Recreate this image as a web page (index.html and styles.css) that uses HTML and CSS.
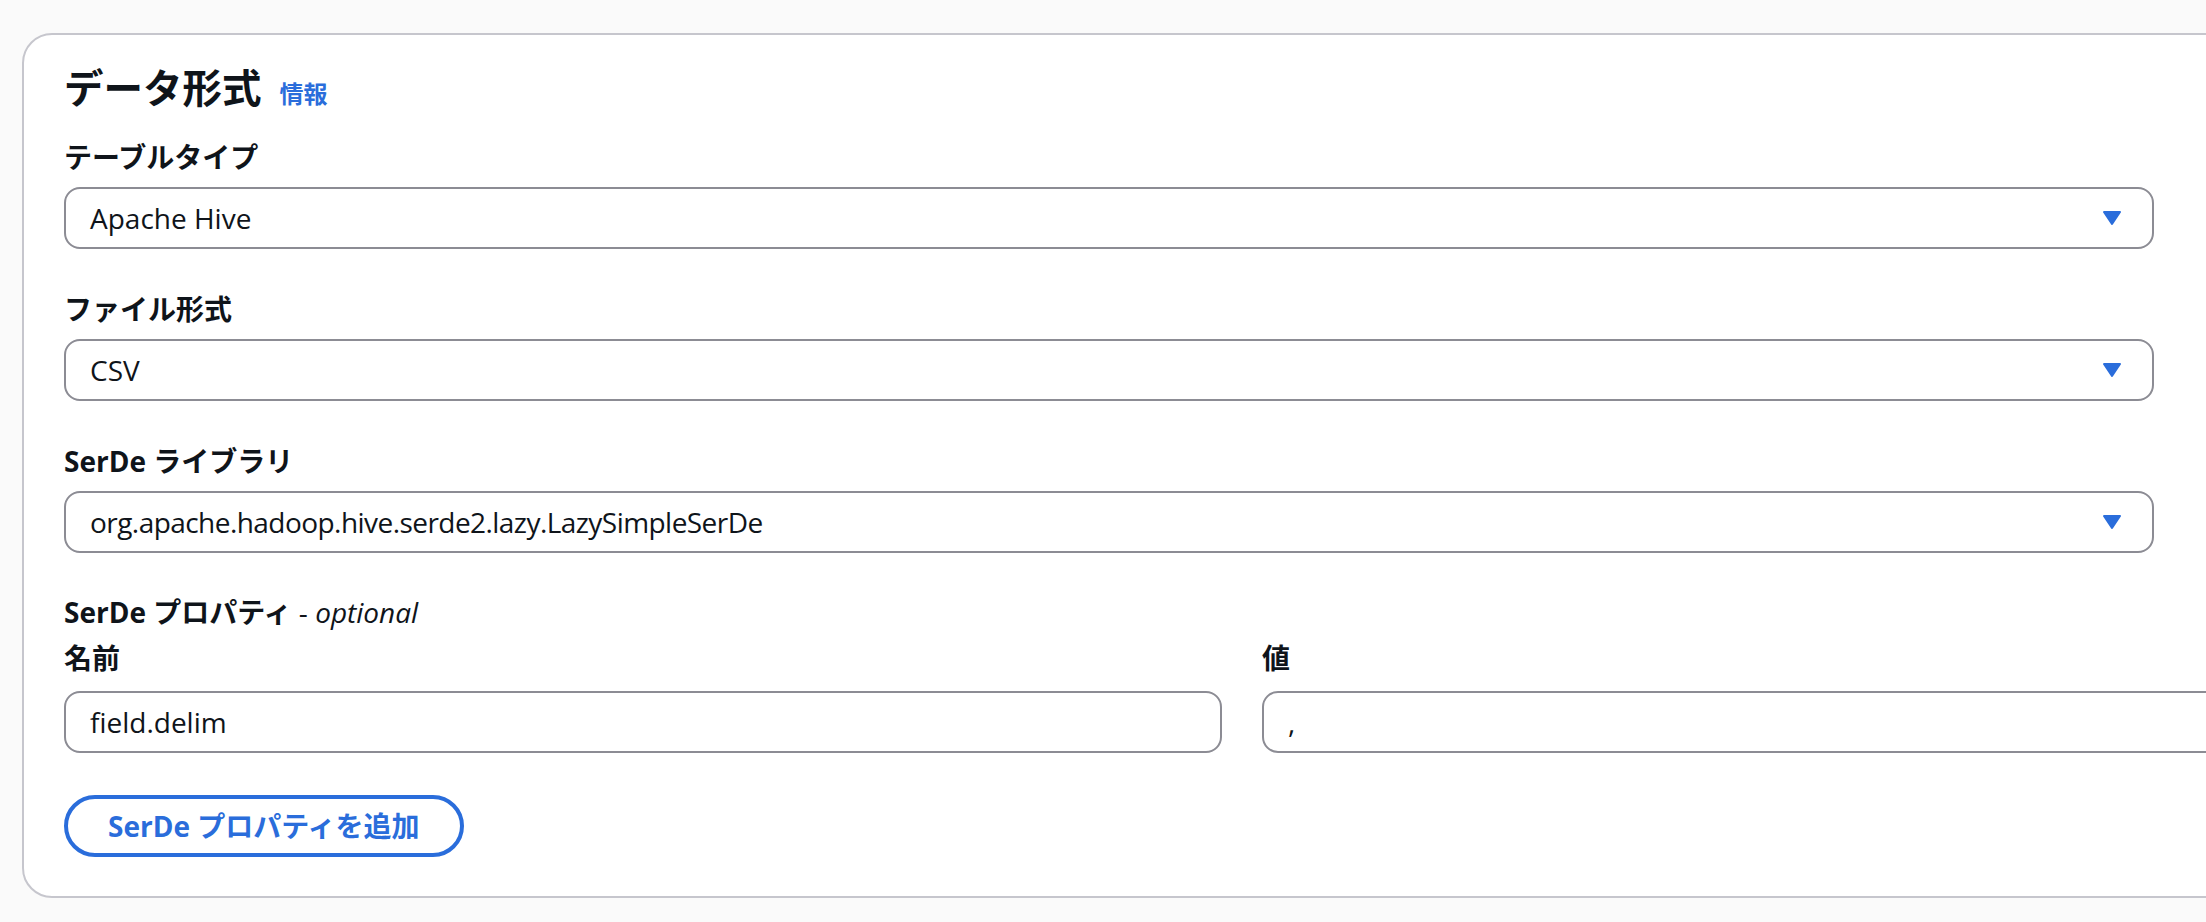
FILE: index.html
```html
<!DOCTYPE html>
<html lang="ja">
<head>
<meta charset="utf-8">
<title>データ形式</title>
<link rel="stylesheet" href="styles.css">
</head>
<body>
<div class="page">
  <section class="card">
    <header class="card-header">
      <h2 class="title">データ形式</h2>
      <a class="info" href="#">情報</a>
    </header>

    <div class="field">
      <div class="label">テーブルタイプ</div>
      <div class="control select">
        <span class="value">Apache Hive</span>
        <svg class="caret" viewBox="0 0 16 16" aria-hidden="true"><path d="M4 5h8l-4 6-4-6z"/></svg>
      </div>
    </div>

    <div class="field">
      <div class="label">ファイル形式</div>
      <div class="control select">
        <span class="value">CSV</span>
        <svg class="caret" viewBox="0 0 16 16" aria-hidden="true"><path d="M4 5h8l-4 6-4-6z"/></svg>
      </div>
    </div>

    <div class="field">
      <div class="label">SerDe ライブラリ</div>
      <div class="control select">
        <span class="value value-long">org.apache.hadoop.hive.serde2.lazy.LazySimpleSerDe</span>
        <svg class="caret" viewBox="0 0 16 16" aria-hidden="true"><path d="M4 5h8l-4 6-4-6z"/></svg>
      </div>
    </div>

    <div class="props">
      <div class="label">SerDe プロパティ <span class="opt">- <i>optional</i></span></div>
      <div class="attr-row">
        <div class="attr-col">
          <div class="label small-gap">名前</div>
          <div class="control input"><span class="value">field.delim</span></div>
        </div>
        <div class="attr-col">
          <div class="label small-gap">値</div>
          <div class="control input"><span class="value">,</span></div>
        </div>
      </div>
    </div>

    <button class="btn" type="button">SerDe プロパティを追加</button>
  </section>
</div>
</body>
</html>
```

FILE: styles.css
```css
html, body {
  margin: 0;
  padding: 0;
  overflow: hidden;
  background: #fafafa;
}

body {
  font-family: "Open Sans", "Noto Sans CJK JP", sans-serif;
  color: #0f141a;
}

.page {
  padding: 33px 0 0 22px;
  width: 2600px;
}

.card {
  box-sizing: border-box;
  width: 2442px;
  background: #ffffff;
  border: 2px solid #c6c6cd;
  border-radius: 30px;
  padding: 25px 40px 39px 40px;
  display: flex;
  flex-direction: column;
  align-items: flex-start;
}

.card-header {
  display: flex;
  align-items: baseline;
  gap: 18px;
  height: 56px;
  line-height: 56px;
}

.title {
  margin: 0;
  font-size: 39.5px;
  font-weight: 700;
  line-height: 56px;
}

.info {
  font-size: 24px;
  font-weight: 700;
  color: #2a6ddb;
  text-decoration: none;
}

.field {
  margin-top: 21px;
  display: flex;
  flex-direction: column;
}

.field + .field {
  margin-top: 40px;
}

.label {
  font-size: 28px;
  font-weight: 700;
  line-height: 40px;
  margin-bottom: 10px;
}

.opt {
  font-weight: 400;
}

.opt i {
  font-style: italic;
}

.control {
  box-sizing: border-box;
  height: 62px;
  border: 2px solid #8c8c94;
  border-radius: 16px;
  background: #ffffff;
  display: flex;
  align-items: center;
  padding: 0 24px;
  font-size: 28px;
  line-height: 40px;
}

.select {
  width: 2090px;
  justify-content: space-between;
}

.value-long {
  letter-spacing: -0.55px;
}

.caret {
  width: 32px;
  height: 32px;
  flex: none;
  fill: #2a6ddb;
  stroke: #2a6ddb;
  stroke-width: 1;
  stroke-linejoin: round;
}

.props {
  margin-top: 39px;
  display: flex;
  flex-direction: column;
  width: 100%;
}

.props > .label {
  margin-bottom: 6px;
}

.attr-row {
  display: grid;
  grid-template-columns: 1158px 1158px;
  column-gap: 40px;
}

.attr-col {
  display: flex;
  flex-direction: column;
}

.label.small-gap {
  margin-bottom: 13px;
}

.btn {
  margin-top: 42px;
  box-sizing: border-box;
  height: 62px;
  padding: 0 40px;
  border: 4px solid #2a6ddb;
  border-radius: 40px;
  background: #ffffff;
  color: #2a6ddb;
  font-family: "Open Sans", "Noto Sans CJK JP", sans-serif;
  font-size: 28px;
  font-weight: 700;
  line-height: 54px;
  cursor: pointer;
}
```
